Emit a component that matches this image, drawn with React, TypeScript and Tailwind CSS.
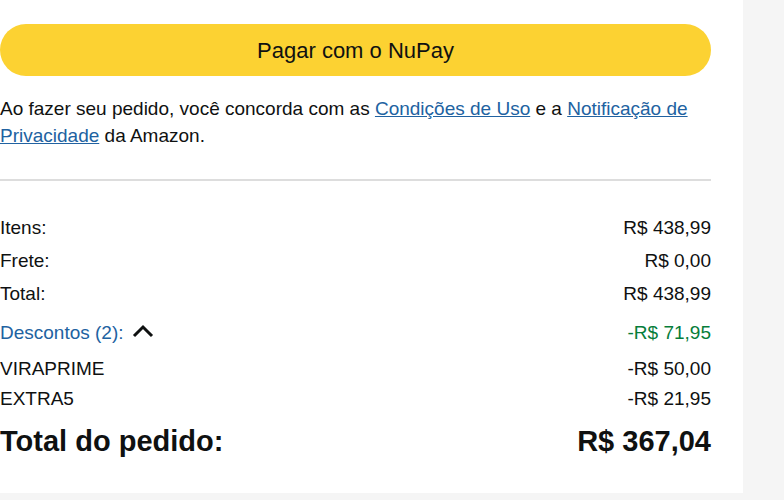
import React from "react";

const Row = ({ label, value, className = "" }: { label: string; value: string; className?: string }) => (
  <div className={`flex justify-between items-center ${className}`}>
    <span>{label}</span>
    <span>{value}</span>
  </div>
);

export default function App() {
  return (
    <div className="w-[784px] h-[500px] bg-[#f5f5f5] flex overflow-hidden" style={{ fontFamily: '"Liberation Sans", Arial, sans-serif' }}>
      <div className="w-[743px] h-[493px] bg-white pr-[32px] pt-[24px] text-[#0f1111]">
        <button className="w-[711px] h-[52px] rounded-full bg-[#fcd232] text-[22px] text-[#0f1111] flex items-center justify-center">
          Pagar com o NuPay
        </button>
        <p className="mt-[19px] text-[19px] leading-[27px]">
          Ao fazer seu pedido, você concorda com as{" "}
          <a className="text-[#2162a1] underline">Condições de Uso</a> e a{" "}
          <a className="text-[#2162a1] underline">Notificação de Privacidade</a> da Amazon.
        </p>
        <div className="mt-[30px] h-[2px] bg-[#dddddd]" />
        <div className="mt-[30px] text-[19px] leading-[33px]">
          <Row label="Itens:" value="R$ 438,99" />
          <Row label="Frete:" value="R$ 0,00" />
          <Row label="Total:" value="R$ 438,99" />
          <div className="flex justify-between items-center mt-[6px]">
            <span className="flex items-center gap-[8px] text-[#2162a1]">
              Descontos (2):
              <svg width="22" height="14" viewBox="0 0 22 14" className="mb-[4px]">
                <path d="M2 12 L11 3 L20 12" fill="none" stroke="#0f1111" strokeWidth="3" />
              </svg>
            </span>
            <span className="text-[#067d3a]">-R$ 71,95</span>
          </div>
          <div className="leading-[30px] mt-[5px]">
            <Row label="VIRAPRIME" value="-R$ 50,00" />
            <Row label="EXTRA5" value="-R$ 21,95" />
          </div>
          <div className="flex justify-between items-center mt-[7px] text-[29px] font-bold leading-[40px]">
            <span>Total do pedido:</span>
            <span>R$ 367,04</span>
          </div>
        </div>
      </div>
    </div>
  );
}
